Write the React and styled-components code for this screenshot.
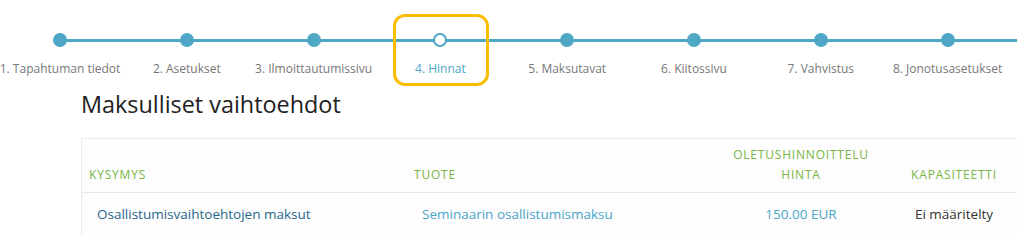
import React from "react";
import styled, { createGlobalStyle } from "styled-components";

const Global = createGlobalStyle`
  html, body { margin: 0; padding: 0; background: #ffffff; }
  body { overflow: hidden; font-family: "Open Sans", "Liberation Sans", sans-serif; }
  #root { width: 1017px; overflow: hidden; }
`;

const BLUE = "#4ea8c5";

const Page = styled.div`
  width: 1017px;
  height: 235px;
  overflow: hidden;
`;

const Steps = styled.ol`
  list-style: none;
  margin: 0 0 0 -3.4px;
  padding: 0;
  display: flex;
  height: 88px;
`;

const Step = styled.li`
  position: relative;
  flex: 0 0 126.8px;
  display: flex;
  flex-direction: column;
  align-items: center;
  &::before {
    content: "";
    position: absolute;
    top: 39px;
    height: 3px;
    left: ${(p) => (p.$first ? "50%" : "0")};
    right: 0;
    background: ${BLUE};
  }
`;

const Dot = styled.span`
  position: relative;
  z-index: 1;
  box-sizing: border-box;
  width: 14px;
  height: 14px;
  margin-top: 33px;
  border-radius: 50%;
  background: ${(p) => (p.$active ? "#ffffff" : BLUE)};
  border: ${(p) => (p.$active ? `2.5px solid ${BLUE}` : "none")};
`;

const StepLabel = styled.span`
  margin-top: 14px;
  font-family: "Open Sans", sans-serif;
  font-size: 12px;
  line-height: 16px;
  white-space: nowrap;
  color: ${(p) => (p.$active ? BLUE : "#787878")};
`;

const Highlight = styled.span`
  position: absolute;
  top: 14px;
  left: 16px;
  right: 15px;
  height: 72px;
  box-sizing: border-box;
  border: 3px solid #fbbc04;
  border-radius: 12px;
  pointer-events: none;
`;

const Heading = styled.h2`
  margin: 2px 0 0 81px;
  font-family: "Open Sans", sans-serif;
  font-weight: 400;
  font-size: 23.4px;
  line-height: 28px;
  color: #222222;
`;

const Table = styled.div`
  margin: 20px 0 0 81px;
  width: 960px;
  border-top: 1px solid #ebebeb;
  border-left: 1px solid #ebebeb;
  background: #fdfdfd;
`;

const Row = styled.div`
  display: grid;
  grid-template-columns: 325px 318px 152px 154px;
  border-bottom: ${(p) => (p.$head ? "1px solid #e8e8e8" : "none")};
  min-height: ${(p) => (p.$head ? "53px" : "42px")};
`;

const HeadCell = styled.div`
  display: flex;
  align-items: flex-end;
  justify-content: ${(p) => (p.$center ? "center" : "flex-start")};
  text-align: ${(p) => (p.$center ? "center" : "left")};
  padding: 0 7px 7px;
  font-family: "Open Sans", sans-serif;
  font-size: 12px;
  line-height: 20px;
  letter-spacing: 0.8px;
  text-transform: uppercase;
  color: #78b543;
`;

const Cell = styled.div`
  display: flex;
  align-items: center;
  justify-content: ${(p) => (p.$center ? "center" : "flex-start")};
  padding: 0 ${(p) => (p.$center ? "8px" : "8px 0 15px")};
  font-family: "Open Sans", sans-serif;
  font-size: 13.5px;
  line-height: 20px;
  color: ${(p) => p.$color || "#333333"};
`;

const steps = [
  "1. Tapahtuman tiedot",
  "2. Asetukset",
  "3. Ilmoittautumissivu",
  "4. Hinnat",
  "5. Maksutavat",
  "6. Kiitossivu",
  "7. Vahvistus",
  "8. Jonotusasetukset",
  "9. Sähköpostiviestit",
];

export default function App() {
  return (
    <Page>
      <Global />
      <Steps>
        {steps.map((s, i) => (
          <Step key={s} $first={i === 0}>
            <Dot $active={i === 3} />
            <StepLabel $active={i === 3}>{s}</StepLabel>
            {i === 3 && <Highlight />}
          </Step>
        ))}
      </Steps>
      <Heading>Maksulliset vaihtoehdot</Heading>
      <Table>
        <Row $head>
          <HeadCell>Kysymys</HeadCell>
          <HeadCell>Tuote</HeadCell>
          <HeadCell $center>
            Oletushinnoittelu
            <br />
            hinta
          </HeadCell>
          <HeadCell $center>Kapasiteetti</HeadCell>
        </Row>
        <Row>
          <Cell $color="#25678c">Osallistumisvaihtoehtojen maksut</Cell>
          <Cell $color="#4aa6c9">Seminaarin osallistumismaksu</Cell>
          <Cell $center $color="#4aa6c9">150.00 EUR</Cell>
          <Cell $center>Ei määritelty</Cell>
        </Row>
      </Table>
    </Page>
  );
}
